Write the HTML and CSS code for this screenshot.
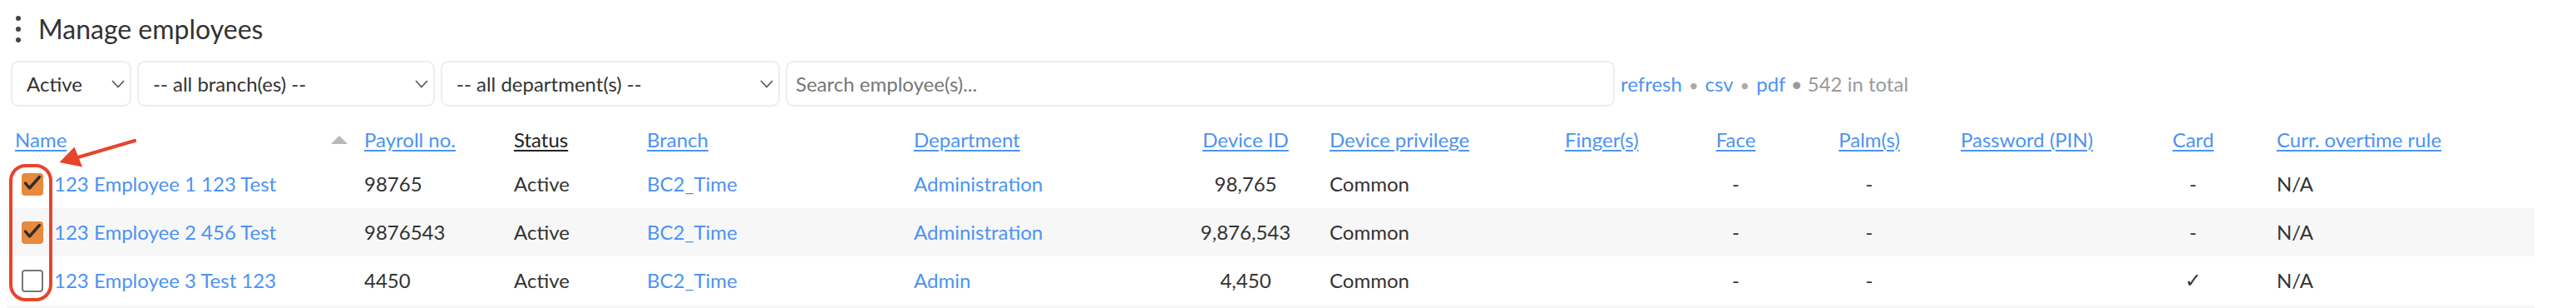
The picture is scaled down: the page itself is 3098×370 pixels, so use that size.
FILE: index.html
```html
<!DOCTYPE html>
<html lang="en">
<head>
<meta charset="utf-8">
<title>Manage employees</title>
<link rel="stylesheet" href="styles.css">
</head>
<body>
<div class="page">
  <header class="title-row">
    <span class="kebab"><i></i><i></i><i></i></span>
    <h1 class="title">Manage employees</h1>
  </header>

  <div class="filters">
    <div class="sel sel-status">
      <select><option>Active</option></select>
      <svg class="chev" width="16" height="10" viewBox="0 0 16 10"><path d="M1 1 L8 8.5 L15 1" fill="none" stroke="#555" stroke-width="1.6"/></svg>
    </div>
    <div class="sel sel-branch">
      <select><option>-- all branch(es) --</option></select>
      <svg class="chev" width="16" height="10" viewBox="0 0 16 10"><path d="M1 1 L8 8.5 L15 1" fill="none" stroke="#555" stroke-width="1.6"/></svg>
    </div>
    <div class="sel sel-dept">
      <select><option>-- all department(s) --</option></select>
      <svg class="chev" width="16" height="10" viewBox="0 0 16 10"><path d="M1 1 L8 8.5 L15 1" fill="none" stroke="#555" stroke-width="1.6"/></svg>
    </div>
    <input class="search" type="text" placeholder="Search employee(s)...">
    <div class="actions">
      <a href="#">refresh</a><span class="sep">•</span><a href="#">csv</a><span class="sep">•</span><a href="#">pdf</a><span class="total"> • 542 in total</span>
    </div>
  </div>

  <table class="grid">
    <colgroup>
      <col style="width:420px"><col style="width:180px"><col style="width:160px"><col style="width:321px">
      <col style="width:318px"><col style="width:182px"><col style="width:283px"><col style="width:155px">
      <col style="width:121px"><col style="width:200px"><col style="width:199px"><col style="width:181px">
      <col style="width:320px">
    </colgroup>
    <thead>
      <tr>
        <th><div class="sort-head"><a href="#">Name</a><span class="tri"></span></div></th>
        <th><a href="#">Payroll no.</a></th>
        <th><span class="plain">Status</span></th>
        <th><a href="#">Branch</a></th>
        <th><a href="#">Department</a></th>
        <th class="c"><a href="#">Device ID</a></th>
        <th><a href="#">Device privilege</a></th>
        <th><a href="#">Finger(s)</a></th>
        <th class="c"><a href="#">Face</a></th>
        <th class="c"><a href="#">Palm(s)</a></th>
        <th><a href="#">Password (PIN)</a></th>
        <th class="c"><a href="#">Card</a></th>
        <th><a href="#">Curr. overtime rule</a></th>
      </tr>
    </thead>
    <tbody>
      <tr>
        <td><div class="name-cell"><span class="cb on"><svg width="26" height="27" viewBox="0 0 26 27"><path d="M4.5 12 L9.5 18 L21.5 4.5" fill="none" stroke="#2d2d2d" stroke-width="3.4" stroke-linecap="round" stroke-linejoin="round"/></svg></span><a href="#">123 Employee 1 123 Test</a></div></td>
        <td>98765</td>
        <td>Active</td>
        <td><a href="#">BC2_Time</a></td>
        <td><a href="#">Administration</a></td>
        <td class="c">98,765</td>
        <td>Common</td>
        <td></td>
        <td class="c">-</td>
        <td class="c">-</td>
        <td></td>
        <td class="c">-</td>
        <td>N/A</td>
      </tr>
      <tr>
        <td><div class="name-cell"><span class="cb on"><svg width="26" height="27" viewBox="0 0 26 27"><path d="M4.5 12 L9.5 18 L21.5 4.5" fill="none" stroke="#2d2d2d" stroke-width="3.4" stroke-linecap="round" stroke-linejoin="round"/></svg></span><a href="#">123 Employee 2 456 Test</a></div></td>
        <td>9876543</td>
        <td>Active</td>
        <td><a href="#">BC2_Time</a></td>
        <td><a href="#">Administration</a></td>
        <td class="c">9,876,543</td>
        <td>Common</td>
        <td></td>
        <td class="c">-</td>
        <td class="c">-</td>
        <td></td>
        <td class="c">-</td>
        <td>N/A</td>
      </tr>
      <tr>
        <td><div class="name-cell"><span class="cb"></span><a href="#">123 Employee 3 Test 123</a></div></td>
        <td>4450</td>
        <td>Active</td>
        <td><a href="#">BC2_Time</a></td>
        <td><a href="#">Admin</a></td>
        <td class="c">4,450</td>
        <td>Common</td>
        <td></td>
        <td class="c">-</td>
        <td class="c">-</td>
        <td></td>
        <td class="c check">✓</td>
        <td>N/A</td>
      </tr>
    </tbody>
  </table>

  <div class="annot-box"></div>
  <svg class="annot-arrow" width="120" height="50" viewBox="60 160 120 50">
    <line x1="162" y1="169" x2="92" y2="189.5" stroke="#e8442c" stroke-width="4.2" stroke-linecap="round"/>
    <polygon points="71.5,195 89.5,176.5 99,200.5" fill="#e8442c"/>
  </svg>
</div>
</body>
</html>
```

FILE: styles.css
```css
* { box-sizing: border-box; }

html, body {
  margin: 0;
  padding: 0;
  background: #fff;
}

body {
  font-family: Lato, "Open Sans", "Liberation Sans", sans-serif;
  color: #333;
  font-size: 24px;
}

.page {
  position: relative;
  padding: 8px;
}

a { color: #4c93f3; text-decoration: none; }

/* title */
.title-row {
  display: flex;
  align-items: center;
  height: 40px;
  margin-top: 7px;
}

.kebab {
  display: flex;
  flex-direction: column;
  gap: 7px;
  margin-left: 11px;
  width: 6px;
}

.kebab i {
  display: block;
  width: 6px;
  height: 6px;
  border-radius: 50%;
  background: #444;
}

.title {
  margin: 0 0 0 21px;
  font-size: 32px;
  font-weight: 400;
  line-height: 40px;
  color: #333;
}

/* filters */
.filters {
  display: flex;
  align-items: center;
  gap: 7px;
  margin: 18px 0 0 5px;
}

.sel {
  position: relative;
  height: 55px;
}

.sel select {
  appearance: none;
  -webkit-appearance: none;
  width: 100%;
  height: 55px;
  border: 2px solid #eeeeee;
  border-radius: 9px;
  background: #fff;
  font-family: inherit;
  font-size: 24px;
  color: #333;
  padding: 0 30px 0 17px;
  outline: none;
}

.sel .chev {
  position: absolute;
  right: 8px;
  top: 23px;
  pointer-events: none;
}

.sel-status { width: 145px; }
.sel-branch { width: 358px; }
.sel-dept { width: 408px; }

.search {
  width: 997px;
  height: 55px;
  border: 2px solid #eeeeee;
  border-radius: 9px;
  font-family: inherit;
  font-size: 24px;
  color: #333;
  padding: 0 10px;
  outline: none;
}

.search::placeholder { color: #777; }

.actions {
  display: flex;
  align-items: baseline;
  white-space: pre;
  color: #999;
}

.actions .sep {
  color: #aaa;
  margin: 0 8px;
  font-size: 20px;
}

.actions .total { color: #999; }

/* table */
.grid {
  margin-top: 16px;
  width: 3040px;
  table-layout: fixed;
  border-collapse: collapse;
  border-bottom: 4px solid #f7f7f7;
  font-size: 24px;
  line-height: 28px;
}

.grid th {
  text-align: left;
  font-weight: 400;
  padding: 10px 10px;
  white-space: nowrap;
}

.grid th a { text-decoration: underline; text-underline-offset: 3px; }

.grid th .plain {
  color: #222;
  text-decoration: underline;
  text-underline-offset: 3px;
}

.grid td {
  padding: 15px 10px;
  white-space: nowrap;
  color: #333;
}

.grid .c { text-align: center; }

.grid tbody tr:nth-child(even) { background: #f7f7f7; }

.sort-head {
  display: flex;
  align-items: center;
  justify-content: space-between;
}

.tri {
  width: 0;
  height: 0;
  border-left: 10px solid transparent;
  border-right: 10px solid transparent;
  border-bottom: 10px solid #b8b8b8;
}

.name-cell {
  display: flex;
  align-items: center;
  gap: 13px;
  margin-left: 8px;
}

.cb {
  display: block;
  flex: none;
  width: 26px;
  height: 27px;
  border: 2px solid #777;
  border-radius: 4px;
  background: #fff;
}

.cb.on {
  border: none;
  background: #e8893b;
}

.cb svg { display: block; }

.check {
  font-family: "DejaVu Sans", sans-serif;
  font-size: 24px;
}

/* annotation overlay */
.annot-box {
  position: absolute;
  left: 11px;
  top: 197px;
  width: 52px;
  height: 165px;
  border: 4.5px solid #e8442c;
  border-radius: 20px;
}

.annot-arrow {
  position: absolute;
  left: 60px;
  top: 160px;
}
```
